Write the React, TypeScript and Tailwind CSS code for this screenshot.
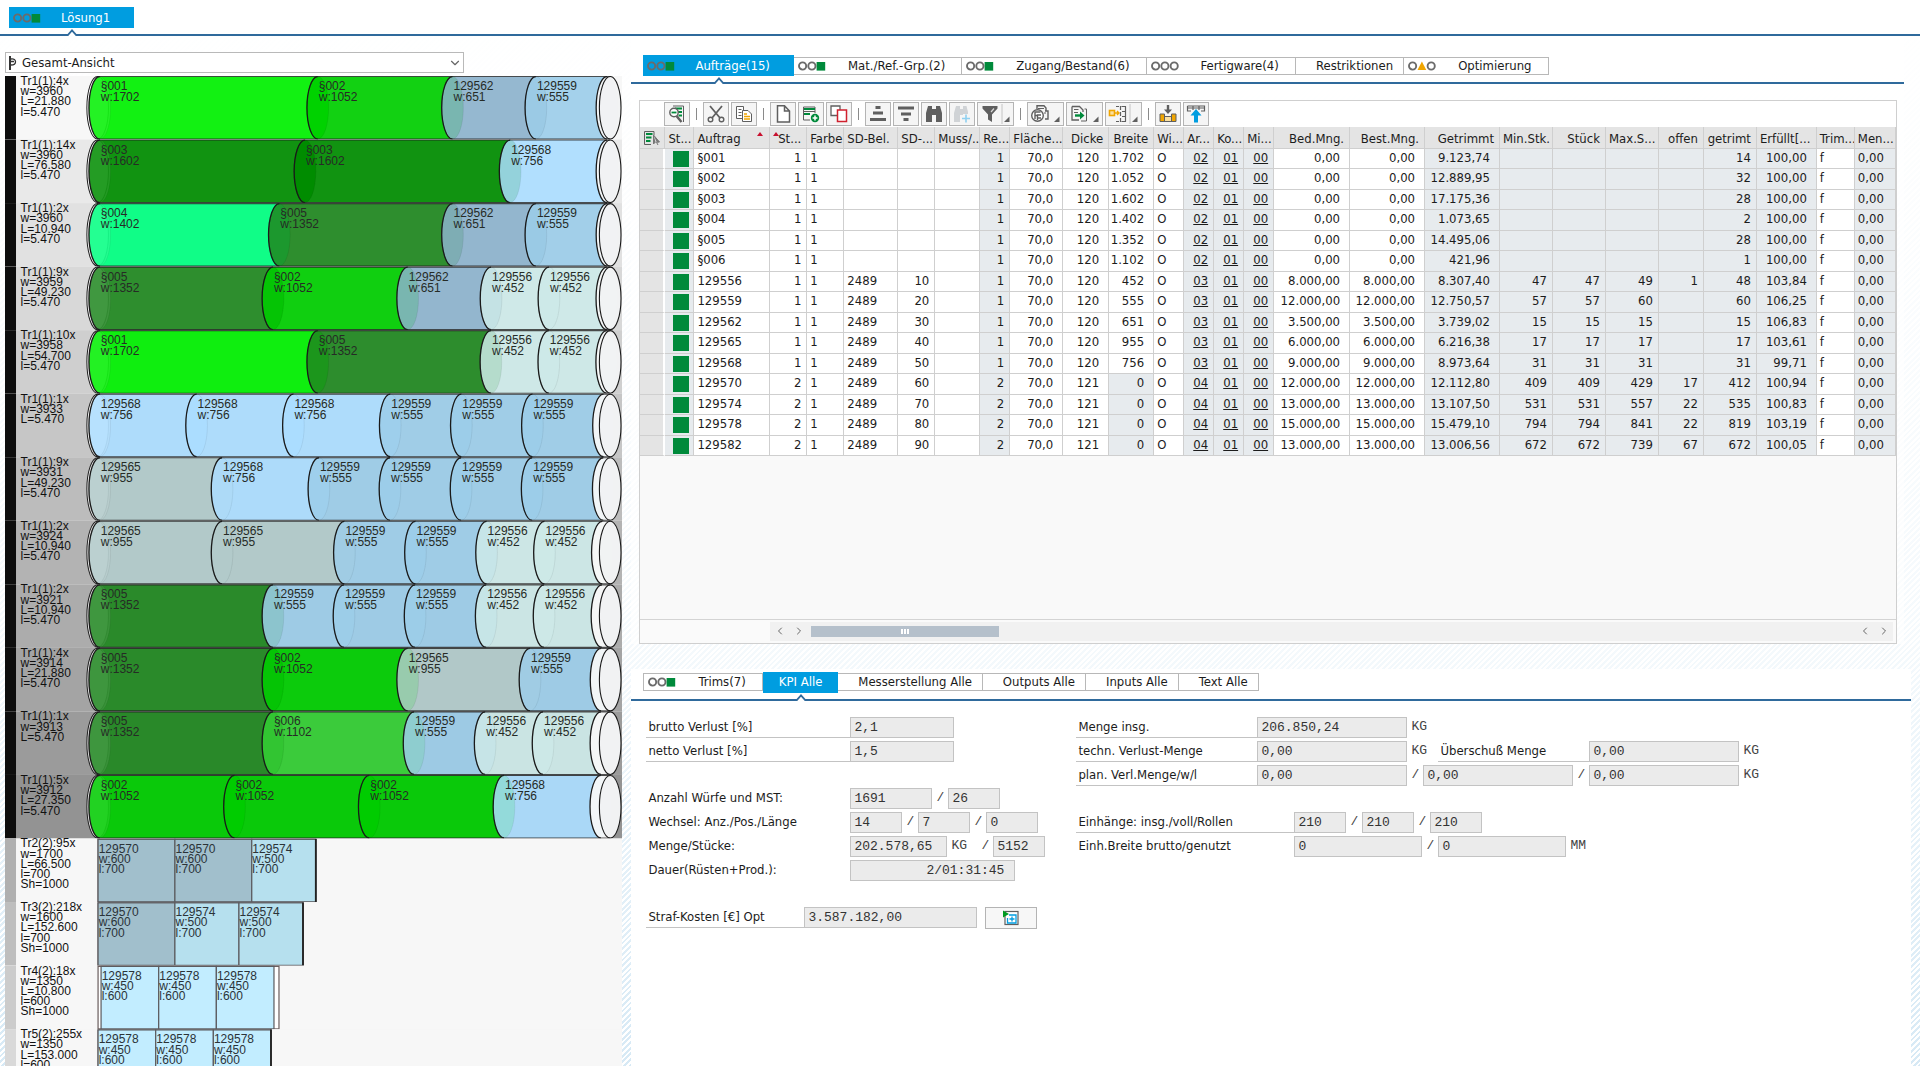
// Trim optimisation workbench
// Left: graphical view of the trims, right: order grid and KPIs

import React from 'react'
import { ChevronDown, ChevronLeft, ChevronRight } from 'lucide-react'

// =====================================================
// DATA
// =====================================================
interface Trim {
  label: string[]
  bg: string
  items: string[]
}

const PX_PER_MM = 0.128
const ROW_H = 63.5

const material: Record<string, { w: number; color: string }> = {
  '§001': { w: 1702, color: '#00f000' },
  '§002': { w: 1052, color: '#00ce00' },
  '§003': { w: 1602, color: '#008c00' },
  '§004': { w: 1402, color: '#00ff80' },
  '§005': { w: 1352, color: '#208820' },
  '§006': { w: 1102, color: '#34cf34' },
  '129556': { w: 452, color: '#cdeae8' },
  '129559': { w: 555, color: '#9dcdea' },
  '129562': { w: 651, color: '#8db3cc' },
  '129565': { w: 955, color: '#b2caca' },
  '129568': { w: 756, color: '#acdeff' },
}

const rollTrims: Trim[] = [
  { label: ['Tr1(1):4x', 'w=3960', 'L=21.880', 'l=5.470'], bg: '#f7f7f7', items: ['§001', '§002', '129562', '129559'] },
  { label: ['Tr1(1):14x', 'w=3960', 'L=76.580', 'l=5.470'], bg: '#e9e9e9', items: ['§003', '§003', '129568'] },
  { label: ['Tr1(1):2x', 'w=3960', 'L=10.940', 'l=5.470'], bg: '#e1e1e1', items: ['§004', '§005', '129562', '129559'] },
  { label: ['Tr1(1):9x', 'w=3959', 'L=49.230', 'l=5.470'], bg: '#d8d8d8', items: ['§005', '§002', '129562', '129556', '129556'] },
  { label: ['Tr1(1):10x', 'w=3958', 'L=54.700', 'l=5.470'], bg: '#cfcfcf', items: ['§001', '§005', '129556', '129556'] },
  { label: ['Tr1(1):1x', 'w=3933', 'L=5.470'], bg: '#c6c6c6', items: ['129568', '129568', '129568', '129559', '129559', '129559'] },
  { label: ['Tr1(1):9x', 'w=3931', 'L=49.230', 'l=5.470'], bg: '#bcbcbc', items: ['129565', '129568', '129559', '129559', '129559', '129559'] },
  { label: ['Tr1(1):2x', 'w=3924', 'L=10.940', 'l=5.470'], bg: '#b3b3b3', items: ['129565', '129565', '129559', '129559', '129556', '129556'] },
  { label: ['Tr1(1):2x', 'w=3921', 'L=10.940', 'l=5.470'], bg: '#acacac', items: ['§005', '129559', '129559', '129559', '129556', '129556'] },
  { label: ['Tr1(1):4x', 'w=3914', 'L=21.880', 'l=5.470'], bg: '#a4a4a4', items: ['§005', '§002', '129565', '129559'] },
  { label: ['Tr1(1):1x', 'w=3913', 'L=5.470'], bg: '#9b9b9b', items: ['§005', '§006', '129559', '129556', '129556'] },
  { label: ['Tr1(1):5x', 'w=3912', 'L=27.350', 'l=5.470'], bg: '#939393', items: ['§002', '§002', '§002', '129568'] },
]

const sheetColor: Record<string, string> = {
  '129570': '#a1bfcc',
  '129574': '#b6e0ee',
  '129578': '#c2edff',
}

const sheetTrims = [
  { label: ['Tr2(2):95x', 'w=1700', 'L=66.500', 'l=700', 'Sh=1000'], bar: '#b0b0b0', edge: 0, len: 700, items: [['129570', 600], ['129570', 600], ['129574', 500]] },
  { label: ['Tr3(2):218x', 'w=1600', 'L=152.600', 'l=700', 'Sh=1000'], bar: '#bebebe', edge: 0, len: 700, items: [['129570', 600], ['129574', 500], ['129574', 500]] },
  { label: ['Tr4(2):18x', 'w=1350', 'L=10.800', 'l=600', 'Sh=1000'], bar: '#cccccc', edge: 4, len: 600, items: [['129578', 450], ['129578', 450], ['129578', 450]] },
  { label: ['Tr5(2):255x', 'w=1350', 'L=153.000', 'l=600', 'Sh=1000'], bar: '#d9d9d9', edge: 0, len: 600, items: [['129578', 450], ['129578', 450], ['129578', 450]] },
] as { label: string[]; bar: string; edge: number; len: number; items: [string, number][] }[]

const L = 'text-left pl-[3px]'
const R = 'text-right pr-[5px]'
const RW = 'text-right pr-[9px]'

const columns = [
  { head: 'St...', width: 29, cell: L, th: L, shaded: true },
  { head: 'Auftrag', width: 76, cell: L, th: L },
  { head: 'St...', width: 37, cell: R, th: R },
  { head: 'Farbe', width: 37, cell: L, th: L },
  { head: 'SD-Bel.', width: 54, cell: L, th: L },
  { head: 'SD-...', width: 37, cell: R, th: L },
  { head: 'Muss/...', width: 45, cell: L, th: L },
  { head: 'Re...', width: 30, cell: R, th: L, shaded: true },
  { head: 'Fläche...', width: 53, cell: RW, th: L },
  { head: 'Dicke', width: 46, cell: RW, th: R },
  { head: 'Breite', width: 45, cell: RW, th: R },
  { head: 'Wi...', width: 30, cell: L, th: L },
  { head: 'Ar...', width: 30, cell: R, th: L, shaded: true, link: true },
  { head: 'Ko...', width: 30, cell: R, th: L, shaded: true, link: true },
  { head: 'Mi...', width: 30, cell: R, th: L, shaded: true, link: true },
  { head: 'Bed.Mng.', width: 76, cell: RW, th: R },
  { head: 'Best.Mng.', width: 75, cell: RW, th: R },
  { head: 'Getrimmt', width: 75, cell: RW, th: R, shaded: true },
  { head: 'Min.Stk.', width: 53, cell: R, th: L, shaded: true },
  { head: 'Stück', width: 53, cell: R, th: R, shaded: true },
  { head: 'Max.S...', width: 53, cell: R, th: L, shaded: true },
  { head: 'offen', width: 45, cell: R, th: R, shaded: true },
  { head: 'getrimt', width: 53, cell: R, th: R, shaded: true },
  { head: 'Erfüllt[...', width: 60, cell: RW, th: L, shaded: true },
  { head: 'Trim...', width: 38, cell: L, th: L },
  { head: 'Men...', width: 41, cell: L, th: L, shaded: true },
]
const totalWidth = columns.reduce((sum, c) => sum + c.width, 25)

// order|stage|SD|pos|width|Ar|Bed|Best|getrimmt|min|stk|max|offen|getrimt|erfüllt
const orders = [
  '§001|1|||1.702|02|0,00|0,00|9.123,74|||||14|100,00',
  '§002|1|||1.052|02|0,00|0,00|12.889,95|||||32|100,00',
  '§003|1|||1.602|02|0,00|0,00|17.175,36|||||28|100,00',
  '§004|1|||1.402|02|0,00|0,00|1.073,65|||||2|100,00',
  '§005|1|||1.352|02|0,00|0,00|14.495,06|||||28|100,00',
  '§006|1|||1.102|02|0,00|0,00|421,96|||||1|100,00',
  '129556|1|2489|10|452|03|8.000,00|8.000,00|8.307,40|47|47|49|1|48|103,84',
  '129559|1|2489|20|555|03|12.000,00|12.000,00|12.750,57|57|57|60||60|106,25',
  '129562|1|2489|30|651|03|3.500,00|3.500,00|3.739,02|15|15|15||15|106,83',
  '129565|1|2489|40|955|03|6.000,00|6.000,00|6.216,38|17|17|17||17|103,61',
  '129568|1|2489|50|756|03|9.000,00|9.000,00|8.973,64|31|31|31||31|99,71',
  '129570|2|2489|60|0|04|12.000,00|12.000,00|12.112,80|409|409|429|17|412|100,94',
  '129574|2|2489|70|0|04|13.000,00|13.000,00|13.107,50|531|531|557|22|535|100,83',
  '129578|2|2489|80|0|04|15.000,00|15.000,00|15.479,10|794|794|841|22|819|103,19',
  '129582|2|2489|90|0|04|13.000,00|13.000,00|13.006,56|672|672|739|67|672|100,05',
].map((line) => {
  const [order, stage, sd, pos, width, ar, bed, best, trimmed, ...rest] = line.split('|')
  return ['', order, stage, '1', sd, pos, '', stage, '70,0', stage === '1' ? '120' : '121', width, 'O', ar, '01', '00', bed, best, trimmed, ...rest, 'f', '0,00']
})

// =====================================================
// TABS
// =====================================================
type Light = 'o' | 'g' | 'y'

function Lights({ state }: { state: string }) {
  return (
    <svg className="h-[10px] w-[28px] shrink-0" viewBox="0 0 28 10" fill="none">
      {(state.split('') as Light[]).map((s, i) => {
        const x = i * 9.3
        if (s === 'g') return <rect key={i} x={x} y="1" width="8.6" height="8.6" fill="#008a3b" />
        if (s === 'y') return <path key={i} d={`M${x + 4.6} 0.6 L${x + 9} 9 H${x + 0.2} Z`} fill="#f0a500" />
        return <circle key={i} cx={x + 4.6} cy="5" r="3.6" stroke="#6b6b6b" strokeWidth="1.9" />
      })}
    </svg>
  )
}

function Tab({ label, lights, active }: { label: string; lights?: string; active?: boolean }) {
  return (
    <button
      role="tab"
      aria-selected={!!active}
      className={
        active
          ? 'relative flex h-[21px] items-center whitespace-nowrap bg-[#009de0] text-white'
          : 'flex h-[18px] items-center whitespace-nowrap border-y border-r border-[#b8b8b8] bg-white text-[#1c1c1c] first:border-l'
      }
    >
      {lights ? (
        <span className={active ? 'flex items-center gap-5 pr-6 pl-[4px]' : 'flex items-center gap-[22px] pr-4 pl-[4px]'}>
          <Lights state={lights} />
          <span>{label}</span>
        </span>
      ) : (
        <span className={active ? 'pr-4 pl-4' : 'pr-[10px] pl-5'}>{label}</span>
      )}
      {active && (
        <svg className="absolute top-[22px] left-1/2 h-[7px] w-[12px] -translate-x-1/2" viewBox="0 0 12 7">
          <path d="M1 7 L6 1.2 L11 7 Z" fill="#fff" />
          <path d="M0.6 6 H1.8 L6 1.4 L10.2 6 H11.4" fill="none" stroke="#2f6a9c" strokeWidth="1.8" />
        </svg>
      )}
    </button>
  )
}

// =====================================================
// TRIM VIEW
// =====================================================
function Lines({ x, y, lines, fill, pitch = 10.2 }: { x: number; y: number; lines: string[]; fill: string; pitch?: number }) {
  return (
    <text x={x} y={y} fill={fill}>
      {lines.map((line, i) => (
        <tspan key={i} x={x} dy={i === 0 ? 0 : pitch}>{line}</tspan>
      ))}
    </text>
  )
}

function Roll({ trim, y }: { trim: Trim; y: number }) {
  const rx = 10.8
  const ry = ROW_H / 2 - 0.5
  const top = y + 0.5
  const cy = top + ry
  const bottom = top + ry * 2
  const end = 609.8
  const starts = [99.7]
  trim.items.forEach((id, i) => starts.push(starts[i] + material[id].w * PX_PER_MM))
  const tail = starts[starts.length - 1]

  const body = (x1: number, x2: number) =>
    `M${x1} ${top} A${rx} ${ry} 0 0 0 ${x1} ${bottom} H${x2} A${rx} ${ry} 0 0 0 ${x2} ${top} Z`
  const arc = (x: number) => `M${x} ${top} A${rx} ${ry} 0 0 0 ${x} ${bottom}`

  return (
    <g>
      <ellipse cx="97.6" cy={cy} rx={rx} ry={ry} fill="#fff" fillOpacity="0.7" stroke="#222" strokeWidth="1" />
      {trim.items.map((id, i) => (
        <g key={i}>
          <path d={body(starts[i], starts[i + 1])} fill={material[id].color} fillOpacity="0.93" stroke="#000" strokeOpacity="0.1" strokeWidth="0.8" />
          {/* back of the roll shining through */}
          <path
            d={`M${starts[i]} ${top} A${rx} ${ry} 0 0 0 ${starts[i]} ${bottom} A${rx} ${ry} 0 0 0 ${starts[i]} ${top} Z`}
            fill={i === 0 ? '#fff' : material[trim.items[i - 1]].color}
            fillOpacity="0.08"
            stroke="#000"
            strokeOpacity="0.08"
            strokeWidth="0.8"
          />
          <path d={arc(starts[i])} fill="none" stroke="#1a1a1a" strokeWidth="1.3" />
        </g>
      ))}
      <path d={body(tail, end)} fill="#f7f7f7" fillOpacity="0.93" />
      <path d={arc(tail)} fill="none" stroke="#1a1a1a" strokeWidth="1.3" />
      <ellipse cx={end} cy={cy} rx={rx} ry={ry} fill="#f1f2f3" fillOpacity="0.9" stroke="#1a1a1a" strokeWidth="1.1" />
      <path d={`M99 ${top} H${end} M99 ${bottom} H${end}`} stroke="#222" strokeOpacity="0.75" strokeWidth="1.1" />
      {trim.items.map((id, i) => (
        <Lines key={i} x={starts[i] + 1} y={y + 14} pitch={11} lines={[id, `w:${material[id].w}`]} fill="#262b26" />
      ))}
    </g>
  )
}

function TrimView() {
  const sheetTop = rollTrims.length * ROW_H
  return (
    <svg className="block w-full" viewBox="5 0 617 1016" fontFamily='"Liberation Sans", Arial, sans-serif' fontSize="12">
      {rollTrims.map((trim, i) => (
        <g key={i}>
          <rect x="5" y={i * ROW_H} width="617" height={ROW_H} fill={trim.bg} />
          <rect x="5" y={i * ROW_H} width="11" height={ROW_H} fill="#0d0d0d" />
          <Lines x={20.5} y={i * ROW_H + 9} lines={trim.label} fill="#111" />
          <Roll trim={trim} y={i * ROW_H} />
        </g>
      ))}
      {sheetTrims.map((trim, i) => {
        const y = sheetTop + i * ROW_H
        const inner = trim.items.reduce((sum, [, w]) => sum + w * PX_PER_MM, 0)
        let x = 98 + (trim.edge ? 3 : 0)
        return (
          <g key={i}>
            <rect x="5" y={y} width="617" height={ROW_H} fill="#f7f7f7" />
            <rect x="5" y={y} width="11" height={ROW_H} fill={trim.bar} />
            <Lines x={20.5} y={y + 9} lines={trim.label} fill="#111" />
            <rect x="98" y={y + 0.8} width={inner + trim.edge * 2} height={ROW_H - 1} fill="#fff" stroke="#6a5d5d" strokeWidth="1.2" />
            {trim.items.map(([id, w], k) => {
              const left = x
              x += w * PX_PER_MM
              return (
                <g key={k}>
                  <rect x={left} y={y + 0.8} width={w * PX_PER_MM} height={ROW_H - 1} fill={sheetColor[id]} stroke="#5a5a5e" strokeWidth="1.2" />
                  <Lines x={left + 0.6} y={y + 14} pitch={10.4} lines={[id, `w:${w}`, `l:${trim.len}`]} fill="#2b3338" />
                </g>
              )
            })}
            {!trim.edge && <path d={`M${x} ${y + 0.5} V${y + ROW_H}`} stroke="#222" strokeWidth="1.8" />}
          </g>
        )
      })}
    </svg>
  )
}

// =====================================================
// TOOLBAR
// =====================================================
const G = '#5f5f5f'

const icons: Record<string, React.ReactNode> = {
  details: (
    <g fill="none">
      <path d="M6 2 H16.5 V18" stroke={G} />
      <path d="M8 4.5 H15 M11 8 H15 M11.5 11.5 H15" stroke="#008a3b" strokeWidth="2" />
      <circle cx="7" cy="8.5" r="4.2" fill="#fff" stroke={G} strokeWidth="1.4" />
      <path d="M4.5 8.5 H9.5" stroke="#008a3b" strokeWidth="1.8" />
      <path d="M9.5 12 L14.5 18" stroke={G} strokeWidth="2.4" />
    </g>
  ),
  cut: (
    <g fill="none" stroke={G}>
      <path d="M4 2 L14 14 M16 2 L6 14" strokeWidth="1.8" />
      <circle cx="4.5" cy="15.5" r="2.3" strokeWidth="1.4" />
      <circle cx="15.5" cy="15.5" r="2.3" strokeWidth="1.4" />
    </g>
  ),
  copy: (
    <g fill="none" stroke={G}>
      <path d="M8 14.5 H2.5 V2.5 H9.5 V6" fill="#fff" />
      <path d="M4.5 5.5 H7.5 M4.5 8.5 H7.5 M4.5 11.5 H7.5" />
      <path d="M8.5 6.5 H14 L17.5 10 V17.5 H8.5 Z" fill="#fff" />
      <path d="M10 10 H13 M10 12.5 H16 M10 15 H16" stroke="#f0a500" strokeWidth="1.6" />
    </g>
  ),
  create: <path d="M4.5 1.8 H11.5 L16.5 7 V18 H4.5 Z M11.5 1.8 V7 H16.5" fill="#fff" stroke={G} strokeWidth="1.5" />,
  insert: (
    <g fill="none">
      <path d="M2.5 3 H14 M2.5 7.5 H14 M2.5 3 V16 H9 M14 3 V9" stroke={G} />
      <path d="M3 5 H14 M3 10 H9" stroke="#008a3b" strokeWidth="2" />
      <circle cx="14" cy="14" r="4.2" fill="#008a3b" />
      <path d="M14 11.6 V16.4 M11.6 14 H16.4" stroke="#fff" strokeWidth="1.5" />
    </g>
  ),
  duplicate: (
    <g fill="#fff">
      <path d="M8 11.5 H2 V2 H11 V6" stroke={G} strokeWidth="1.3" />
      <rect x="8.5" y="6" width="9" height="11.5" stroke="#d0202e" strokeWidth="1.5" />
    </g>
  ),
  asc: <path d="M7.5 3.5 H12.5 M5 9 H15 M2 15.5 H18" stroke={G} strokeWidth="3" />,
  desc: <path d="M2 4 H18 M5 10 H15 M7.5 15.5 H12.5" stroke={G} strokeWidth="3" />,
  find: (
    <path d="M4 2 H8 V5 H12 V2 H16 L18 9 V18 H12 V11 H8 V18 H2 V9 Z" fill={G} />
  ),
  findNext: (
    <g>
      <path d="M4 2 H8 V5 H11 V2 H14.5 L16 8 V10 H11 V11 H8 V18 H2 V9 Z" fill="#d0d3d6" />
      <path d="M14 10.5 V18.5 M10 14.5 H18" stroke="#8fd0f0" strokeWidth="1.6" />
    </g>
  ),
  filter: (
    <g>
      <path d="M2.5 2 H17.5 V4.5 L12 10.5 V18 L8 15.5 V10.5 L2.5 4.5 Z" fill={G} />
      <path d="M11 8 L14 4.5" stroke="#d8d8d8" strokeWidth="1.2" />
    </g>
  ),
  print: (
    <g fill="none" stroke={G}>
      <path d="M7 5 V1.8 H14 L16 4 V7 M15 7 H18 V15 H15" strokeWidth="1.4" />
      <path d="M8 4.5 H14 M14 9 H16" />
      <circle cx="7.5" cy="11.5" r="5.8" fill="#fff" strokeWidth="1.4" />
      <path d="M5 15 V8 H10.5 M7.5 16 V11 H11 M5 11.5 H7 M11 14 H8" strokeWidth="1.4" />
    </g>
  ),
  exportList: (
    <g fill="none">
      <path d="M3 2.5 H10.5 L14 6 V8 M3 2.5 V16 H10" stroke={G} strokeWidth="1.3" />
      <path d="M5 5.5 H9.5 M5 8.5 H9" stroke={G} />
      <path d="M6 11.5 H13" stroke="#008a3b" strokeWidth="2.4" />
      <path d="M11 7.5 L15.5 11.5 L11 15.5 Z" fill="#008a3b" />
      <path d="M15.5 5 H17.5 V17 H12" stroke={G} />
    </g>
  ),
  layout: (
    <g fill="none">
      <path d="M8 2.5 H11 M8 17.5 H11 M13.5 2.5 H18 M13.5 17.5 H18 M17.5 2.5 V17.5 M12.5 2 V6 M12.5 8 V12 M12.5 14 V18 M14 7.5 H17.5 M14 12.5 H17.5" stroke={G} strokeWidth="1.2" />
      <rect x="1.5" y="6.5" width="5" height="5" fill="#fbe0a0" stroke="#f0a500" strokeWidth="1.6" />
      <path d="M7 9 H11 M9 7 L11 9 L9 11" stroke="#f0a500" strokeWidth="1.4" />
    </g>
  ),
  pack: (
    <g fill="none">
      <path d="M10 1 V7" stroke={G} strokeWidth="2.4" />
      <path d="M6 5.5 H14 L10 10 Z" fill={G} />
      <path d="M2 10 H6.5 V17.5 H2 Z M13.5 10 H18 V17.5 H13.5 Z" fill="#f0a500" stroke={G} strokeWidth="1" />
      <rect x="6.5" y="12.5" width="7" height="5" fill="#fbe0a0" stroke={G} strokeWidth="1" />
    </g>
  ),
  upload: (
    <g fill="none">
      <path d="M1.5 2 H18.5 V7 H15 M1.5 2 V7 H5 M1.5 4 H18.5 M7 2 V6 M13 2 V6" stroke={G} strokeWidth="1.2" />
      <path d="M10 5 L15.5 11.5 H12 V18.5 H8 V11.5 H4.5 Z" fill="#009de0" />
    </g>
  ),
}

const toolbar: { icon: string; label: string; menu?: boolean }[][] = [
  [{ icon: 'details', label: 'Details' }],
  [{ icon: 'cut', label: 'Ausschneiden' }, { icon: 'copy', label: 'Kopieren' }],
  [{ icon: 'create', label: 'Anlegen' }, { icon: 'insert', label: 'Zeile einfügen' }, { icon: 'duplicate', label: 'Zeile duplizieren' }],
  [
    { icon: 'asc', label: 'Aufsteigend sortieren' },
    { icon: 'desc', label: 'Absteigend sortieren' },
    { icon: 'find', label: 'Suchen' },
    { icon: 'findNext', label: 'Weiter suchen' },
    { icon: 'filter', label: 'Filter', menu: true },
  ],
  [
    { icon: 'print', label: 'Drucken', menu: true },
    { icon: 'exportList', label: 'Export', menu: true },
    { icon: 'layout', label: 'Layout', menu: true },
  ],
  [{ icon: 'pack', label: 'Übernehmen' }, { icon: 'upload', label: 'Hochladen' }],
]

function Toolbar() {
  return (
    <div className="flex h-[26px] items-center bg-white pl-[24px]">
      {toolbar.map((group, g) => (
        <React.Fragment key={g}>
          {g > 0 && <span className="mx-[6px] h-3 w-px bg-[#8a8a8a]" />}
          <div className="flex gap-0.5">
            {group.map((b) => (
              <button
                key={b.icon}
                aria-label={b.label}
                className={
                  b.menu
                    ? 'flex h-6 w-[37px] items-center border border-[#b4b4b4] bg-[#f5f5f5] pl-[2px]'
                    : 'flex h-6 w-[26px] items-center justify-center border border-[#b4b4b4] bg-[#f5f5f5]'
                }
              >
                <svg className="h-5 w-5 shrink-0" viewBox="0 0 20 20">{icons[b.icon]}</svg>
                {b.menu && (
                  <svg className="h-5 w-[11px] shrink-0" viewBox="0 0 11 20">
                    {b.icon !== 'print' && b.icon !== 'exportList' && <path d="M2 0 V20" stroke="#c4c4c4" />}
                    <path d="M9.5 12.5 V18 H4 Z" fill={G} />
                  </svg>
                )}
              </button>
            ))}
          </div>
        </React.Fragment>
      ))}
    </div>
  )
}

// =====================================================
// ORDER GRID
// =====================================================
function OrderGrid() {
  return (
    <table className="w-full table-fixed border-separate border-spacing-0">
      <colgroup>
        <col style={{ width: `${(25 / totalWidth) * 100}%` }} />
        {columns.map((c, i) => (
          <col key={i} style={{ width: `${(c.width / totalWidth) * 100}%` }} />
        ))}
      </colgroup>
      <thead>
        <tr className="h-[22px]">
          <th className="border-r border-b border-[#cfcfcf] bg-[#e4e4e4] p-0">
            <svg className="ml-[3px] h-4 w-[18px]" viewBox="0 0 18 16" fill="none">
              <path d="M1.5 1.5 H11 V5 M1.5 1.5 V14.5 H8" stroke={G} />
              <path d="M3 4 H9.5 M3 7.5 H8.5 M3 11 H7.5" stroke="#008a3b" strokeWidth="1.8" />
              <path d="M10.5 5 L16.5 12 L13.5 12.3 L15 15 M10.5 5 V14 L12.5 12" fill="#777" stroke="#777" />
            </svg>
          </th>
          {columns.map((c, i) => (
            <th
              key={i}
              className={`relative overflow-hidden border-r border-b border-[#cfcfcf] bg-[#e4e4e4] pt-[2px] pb-0 leading-4 font-normal whitespace-nowrap ${c.th}`}
            >
              {c.head}
              {i === 1 && <span className="absolute top-[5px] right-[6px] border-x-[3px] border-b-[4px] border-x-transparent border-b-[#c8102e]" />}
              {i === 2 && <span className="absolute top-[5px] left-[3px] border-x-[3px] border-b-[4px] border-x-transparent border-b-[#c8102e]" />}
            </th>
          ))}
        </tr>
      </thead>
      <tbody>
        {orders.map((cells, r) => (
          <tr key={r} className="h-5 leading-4 even:h-[21px]">
            <td className="border-r-2 border-b border-r-white border-b-[#cfcfcf] bg-[#e4e4e4] p-0" />
            {columns.map((c, i) => {
              const shaded = c.shaded || (i === 10 && cells[i] === '0')
              return (
                <td
                  key={i}
                  className={`overflow-hidden border-r border-b border-[#cfcfcf] pt-0 whitespace-nowrap ${i === 0 ? 'pb-0' : 'pb-[2px]'} ${c.cell} ${shaded ? 'bg-[#e7ebee]' : 'bg-white'}`}
                >
                  {i === 0 ? (
                    <span className="ml-[5px] block h-4 w-4 bg-[#008a3b]" />
                  ) : c.link ? (
                    <a href="#" className="underline">{cells[i]}</a>
                  ) : (
                    cells[i]
                  )}
                </td>
              )
            })}
          </tr>
        ))}
      </tbody>
    </table>
  )
}

function ScrollBar() {
  return (
    <div className="flex h-6 items-center border-t border-[#d4d4d4] bg-[#fafafa] pr-[3px] pl-[130px]">
      <div className="flex h-[19px] flex-1 items-center bg-[#f1f1f1] text-[#666]">
        <button aria-label="Links" className="flex w-[19px] justify-center"><ChevronLeft size={12} /></button>
        <button aria-label="Rechts" className="flex w-[19px] justify-center"><ChevronRight size={12} /></button>
        <div className="ml-[3px] flex h-[11px] w-1/6 items-center justify-center gap-px bg-[#b5c0cb]">
          <span className="h-[5px] w-[2px] bg-white" />
          <span className="h-[5px] w-[2px] bg-white" />
          <span className="h-[5px] w-[2px] bg-white" />
        </div>
        <div className="flex-1" />
        <button aria-label="Links" className="flex w-[19px] justify-center"><ChevronLeft size={12} /></button>
        <button aria-label="Rechts" className="flex w-[19px] justify-center"><ChevronRight size={12} /></button>
      </div>
    </div>
  )
}

// =====================================================
// KPI FORM
// =====================================================
const mono = "font-['Liberation_Mono','Courier_New',monospace]"

function Field({ id, value, width, label }: { id: string; value: string; width: string; label?: string }) {
  return (
    <input
      id={id}
      readOnly
      aria-label={label}
      defaultValue={value}
      className={`h-[21px] border border-[#c3c3c3] bg-[#ebebeb] px-[3px] text-[#333] outline-none ${mono} ${width}`}
    />
  )
}

function Label({ id, text, width, line }: { id: string; text: string; width: string; line?: boolean }) {
  return (
    <label
      htmlFor={id}
      className={`h-[21px] shrink-0 border-b pl-[2px] leading-5 whitespace-nowrap ${line ? 'border-[#c3c3c3]' : 'border-transparent'} ${width}`}
    >
      {text}
    </label>
  )
}

function Row({ children }: { children?: React.ReactNode }) {
  return <div className="flex h-6 items-start">{children}</div>
}

function Spacer() {
  return <div className="h-[23px]" />
}

function Slash() {
  return <span className={`w-4 text-center leading-5 text-[#444] ${mono}`}>/</span>
}

function Unit({ text, width }: { text: string; width: string }) {
  return <span className={`pl-[4px] leading-5 text-[#444] ${mono} ${width}`}>{text}</span>
}

function KpiForm() {
  return (
    <div className="grid grid-cols-[430px_1fr] pt-4 pl-[15px]">
      <div>
        <Row>
          <Label id="brutto" text="brutto Verlust [%]" width="w-[204px]" line />
          <Field id="brutto" value="2,1" width="w-[104px]" />
        </Row>
        <Row>
          <Label id="netto" text="netto Verlust [%]" width="w-[204px]" line />
          <Field id="netto" value="1,5" width="w-[104px]" />
        </Row>
        <Spacer />
        <Row>
          <Label id="wuerfe" text="Anzahl Würfe und MST:" width="w-[204px]" />
          <Field id="wuerfe" value="1691" width="w-[82px]" />
          <Slash />
          <Field id="mst" label="MST" value="26" width="w-[52px]" />
        </Row>
        <Row>
          <Label id="wechsel" text="Wechsel: Anz./Pos./Länge" width="w-[204px]" />
          <Field id="wechsel" value="14" width="w-[52px]" />
          <Slash />
          <Field id="pos" label="Pos." value="7" width="w-[52px]" />
          <Slash />
          <Field id="laenge" label="Länge" value="0" width="w-[52px]" />
        </Row>
        <Row>
          <Label id="menge" text="Menge/Stücke:" width="w-[204px]" />
          <Field id="menge" value="202.578,65" width="w-[97px]" />
          <Unit text="KG" width="w-[30px]" />
          <Slash />
          <Field id="stuecke" label="Stücke" value="5152" width="w-[52px]" />
        </Row>
        <Row>
          <Label id="dauer" text="Dauer(Rüsten+Prod.):" width="w-[204px]" />
          <Field id="dauer" value="2/01:31:45" width="w-[165px] text-right pr-[10px]" />
        </Row>
        <Spacer />
        <Row>
          <Label id="kosten" text="Straf-Kosten [€] Opt" width="w-[158px]" line />
          <Field id="kosten" value="3.587.182,00" width="w-[173px]" />
          <button
            aria-label="Kosten berechnen"
            className="ml-2 flex h-[22px] w-[52px] items-center justify-center border border-[#b4b4b4] bg-[#f7f7f7]"
          >
            <svg className="h-4 w-[18px]" viewBox="0 0 18 16" fill="none">
              <rect x="3" y="1.5" width="13" height="13" fill="#fff" stroke={G} strokeWidth="1.2" />
              <path d="M7 5 H14 V13 H5.5 V8" stroke="#009de0" strokeWidth="1.3" />
              <path d="M10 6.5 V11.5 M7.5 9 H12.5" stroke="#009de0" strokeWidth="1.3" />
              <path d="M1 0.5 L7 4 L1 7.5 Z" fill="#009a20" />
            </svg>
          </button>
        </Row>
      </div>

      <div>
        <Row>
          <Label id="insg" text="Menge insg." width="w-[181px]" line />
          <Field id="insg" value="206.850,24" width="w-[150px]" />
          <Unit text="KG" width="w-8" />
        </Row>
        <Row>
          <Label id="techn" text="techn. Verlust-Menge" width="w-[181px]" line />
          <Field id="techn" value="0,00" width="w-[150px]" />
          <Unit text="KG" width="w-[31px]" />
          <Label id="ueber" text="Überschuß Menge" width="w-[151px]" line />
          <Field id="ueber" value="0,00" width="w-[150px]" />
          <Unit text="KG" width="w-8" />
        </Row>
        <Row>
          <Label id="plan" text="plan. Verl.Menge/w/l" width="w-[181px]" line />
          <Field id="plan" value="0,00" width="w-[150px]" />
          <Slash />
          <Field id="planw" label="w" value="0,00" width="w-[150px]" />
          <Slash />
          <Field id="planl" label="l" value="0,00" width="w-[150px]" />
          <Unit text="KG" width="w-8" />
        </Row>
        <Spacer />
        <Row>
          <Label id="einh" text="Einhänge: insg./voll/Rollen" width="w-[218px]" line />
          <Field id="einh" value="210" width="w-[52px]" />
          <Slash />
          <Field id="voll" label="voll" value="210" width="w-[52px]" />
          <Slash />
          <Field id="rollen" label="Rollen" value="210" width="w-[52px]" />
        </Row>
        <Row>
          <Label id="breite" text="Einh.Breite brutto/genutzt" width="w-[218px]" />
          <Field id="breite" value="0" width="w-32" />
          <Slash />
          <Field id="genutzt" label="genutzt" value="0" width="w-32" />
          <Unit text="MM" width="w-8" />
        </Row>
      </div>
    </div>
  )
}

// =====================================================
// PAGE
// =====================================================
export default function App() {
  return (
    <div className="flex h-screen flex-col overflow-hidden bg-white bg-[linear-gradient(to_bottom,#fff,#ffffffd0_60%,#ffffff40),repeating-linear-gradient(135deg,#fff_0,#fff_2px,#c9e2f2_2px,#c9e2f2_4px)] font-['DejaVu_Sans_Condensed','DejaVu_Sans',sans-serif] text-[13px] text-[#1c1c1c]">
      <header role="tablist" className="h-9 shrink-0 border-b-2 border-[#2f6a9c] bg-white pt-[7px] pl-[9px]">
        <div className="flex">
          <Tab label="Lösung1" lights="oog" active />
        </div>
      </header>

      <main className="grid min-h-0 flex-1 grid-cols-[minmax(0,49fr)_minmax(0,100fr)]">
        {/* Graphical trims */}
        <section className="flex min-h-0 flex-col pt-4 pr-[9px] pl-[5px]">
          <div className="relative h-[21px] w-[74.4%] shrink-0 border border-[#b9b9b9] bg-white">
            <svg className="pointer-events-none absolute top-[3px] left-[3px] h-[14px] w-2" viewBox="0 0 8 14" fill="none">
              <path d="M1 0 V14" stroke="#000" strokeWidth="1.6" />
              <path d="M2 3 C8 2 8 9 2 9 M2 5.5 H5" stroke="#333" strokeWidth="1.3" />
            </svg>
            <select aria-label="Ansicht" className="h-full w-full appearance-none pl-4 leading-[18px] outline-none">
              <option>Gesamt-Ansicht</option>
            </select>
            <ChevronDown size={14} className="pointer-events-none absolute top-[3px] right-[1px] text-[#666]" />
          </div>
          <div className="mt-[3px] min-h-0 flex-1 overflow-hidden bg-[#f7f7f7]">
            <TrimView />
          </div>
        </section>

        <div className="flex min-h-0 flex-col">
          {/* Orders */}
          <section className="mr-4 flex h-[59%] shrink-0 flex-col bg-white/60">
            <div role="tablist" className="flex items-center border-b-2 border-[#2f6a9c] pt-[19px] pb-[6px] pl-3">
              <Tab label="Aufträge(15)" lights="oog" active />
              <Tab label="Mat./Ref.-Grp.(2)" lights="oog" />
              <Tab label="Zugang/Bestand(6)" lights="oog" />
              <Tab label="Fertigware(4)" lights="ooo" />
              <Tab label="Restriktionen" />
              <Tab label="Optimierung" lights="oyo" />
            </div>
            <div className="mt-4 mr-[7px] ml-2 flex min-h-0 flex-1 flex-col border border-[#cfcfcf] bg-[#f9f9f9]">
              <Toolbar />
              <div className="min-h-0 flex-1 overflow-hidden">
                <OrderGrid />
              </div>
              <ScrollBar />
            </div>
          </section>

          {/* KPIs */}
          <section className="mt-[25px] mr-[9px] min-h-0 flex-1 bg-white">
            <div role="tablist" className="flex items-center border-b-2 border-[#2f6a9c] pt-[3px] pb-[6px] pl-3">
              <Tab label="Trims(7)" lights="oog" />
              <Tab label="KPI Alle" active />
              <Tab label="Messerstellung Alle" />
              <Tab label="Outputs Alle" />
              <Tab label="Inputs Alle" />
              <Tab label="Text Alle" />
            </div>
            <KpiForm />
          </section>
        </div>
      </main>
    </div>
  )
}
